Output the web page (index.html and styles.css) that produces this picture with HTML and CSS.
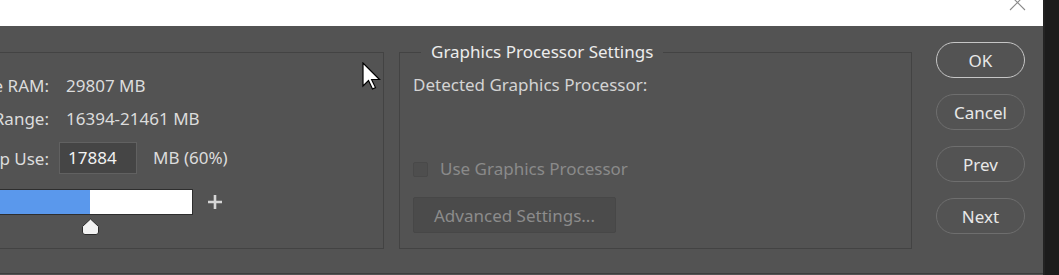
FILE: index.html
```html
<!DOCTYPE html>
<html lang="en">
<head>
<meta charset="utf-8">
<title>Performance</title>
<link rel="stylesheet" href="styles.css">
</head>
<body>
<div class="screen">
  <div class="window">
    <div class="titlebar">
      <svg class="close" width="17" height="17" viewBox="0 0 17 17" aria-hidden="true">
        <path d="M1 1 L16 16 M16 1 L1 16" stroke="#8a8a8a" stroke-width="1.1" fill="none"/>
      </svg>
    </div>
    <div class="content">
      <div class="main">
        <section class="panel memory">
          <div class="rows">
            <span class="label">Available RAM:</span><span class="value">29807 MB</span>
            <span class="label">Ideal Range:</span><span class="value">16394-21461 MB</span>
            <span class="label">Let Photoshop Use:</span>
            <span class="value-input"><span class="input">17884</span><span class="unit">MB (60%)</span></span>
          </div>
          <div class="slider-row">
            <div class="slider"><div class="fill" style="width:199px"></div></div>
            <svg class="plus" width="16" height="16" viewBox="0 0 16 16" aria-hidden="true">
              <path d="M8 1 V15 M1 8 H15" stroke="#d6d6d6" stroke-width="2.6" fill="none"/>
            </svg>
          </div>
          <div class="thumb-row">
            <svg class="thumb" style="margin-left:192px" width="18" height="17" viewBox="0 0 18 17" aria-hidden="true">
              <path d="M8.5 1 L16.5 8.5 V14 Q16.5 16.5 14 16.5 H3 Q0.5 16.5 0.5 14 V8.5 Z" fill="#f2f2f2" stroke="#2b2b2b" stroke-width="1"/>
            </svg>
          </div>
        </section>
        <fieldset class="panel gpu">
          <legend>Graphics Processor Settings</legend>
          <div class="detected">Detected Graphics Processor:</div>
          <label class="check"><span class="box"></span><span>Use Graphics Processor</span></label>
          <button class="adv" type="button">Advanced Settings...</button>
        </fieldset>
        <div class="buttons">
          <button class="pill primary" type="button">OK</button>
          <button class="pill" type="button">Cancel</button>
          <button class="pill" type="button">Prev</button>
          <button class="pill" type="button">Next</button>
        </div>
      </div>
      <div class="divider"></div>
    </div>
  </div>
  <div class="edge"></div>
</div>
<svg class="cursor" width="20" height="29" viewBox="0 0 20 29" aria-hidden="true">
  <path d="M1 1 L1 24 L6.5 18.5 L10.5 27 L13.5 25.6 L9.6 17.5 L17.5 17.5 Z" fill="#ffffff" stroke="#000000" stroke-width="1.2" stroke-linejoin="miter"/>
</svg>
</body>
</html>
```

FILE: styles.css
```css
* { box-sizing: border-box; }

html, body {
  margin: 0;
  padding: 0;
  width: 1059px;
  height: 275px;
  overflow: hidden;
  background: #1d1d1d;
  font-family: "Noto Sans", "Open Sans", sans-serif;
  font-size: 17px;
}

.screen {
  display: flex;
  width: 1059px;
  height: 275px;
}

.window {
  width: 1043px;
  flex-shrink: 0;
  display: flex;
  flex-direction: column;
  overflow: hidden;
}

.edge {
  flex: 1;
  background: #1c1c1c;
  border-left: 2px solid #232323;
}

.titlebar {
  height: 26px;
  background: #ffffff;
  display: flex;
  justify-content: flex-end;
  align-items: flex-start;
  padding-right: 17px;
  overflow: hidden;
  flex-shrink: 0;
}

.close {
  margin-top: -6px;
}

.content {
  flex: 1;
  background: #535353;
  display: flex;
  flex-direction: column;
}

.main {
  display: flex;
  align-items: flex-start;
  padding-top: 16px;
}

.panel {
  flex-shrink: 0;
}

/* Memory panel (cut off at the left) */
.memory {
  margin-left: -200px;
  margin-top: 10px;
  width: 584px;
  height: 197px;
  border: 1px solid #434343;
  padding-top: 16px;
  color: #dcdcdc;
}

.rows {
  display: grid;
  grid-template-columns: 248px auto;
  grid-template-rows: 33px 40px 32px;
  column-gap: 10px;
  align-items: start;
  line-height: 33px;
}

.label {
  text-align: right;
  white-space: nowrap;
}

.value {
  padding-left: 7px;
  white-space: nowrap;
}

.value-input {
  display: flex;
  align-items: center;
  height: 32px;
}

.input {
  width: 78px;
  height: 32px;
  line-height: 30px;
  border: 1px solid #616161;
  background: #454545;
  padding-left: 8px;
  color: #f2f2f2;
}

.unit {
  margin-left: 16px;
  line-height: 32px;
}

.slider-row {
  display: flex;
  align-items: center;
  margin-top: 15px;
  padding-left: 89px;
}

.slider {
  width: 303px;
  height: 26px;
  border: 1px solid #2e2e2e;
  background: #ffffff;
}

.fill {
  height: 100%;
  background: #5a98ec;
}

.plus {
  margin-left: 14px;
}

.thumb-row {
  display: flex;
  padding-left: 89px;
  margin-top: 3px;
}

/* Graphics processor fieldset */
.gpu {
  margin: 0 0 0 15px;
  width: 513px;
  height: 207px;
  border: 1px solid #434343;
  padding: 11px 0 0 13px;
  display: flex;
  flex-direction: column;
  align-items: flex-start;
}

.gpu legend {
  margin-left: 8px;
  padding: 0 10px;
  line-height: 20px;
  color: #ececec;
}

.detected {
  line-height: 24px;
  color: #d4d4d4;
}

.check {
  display: flex;
  align-items: center;
  margin-top: 60px;
  line-height: 24px;
  color: #8a8a8a;
}

.box {
  width: 15px;
  height: 15px;
  border: 1px solid #494949;
  background: #4e4e4e;
  border-radius: 2px;
  margin-right: 12px;
}

.adv {
  margin-top: 16px;
  width: 203px;
  height: 36px;
  background: #4b4b4b;
  border: 1px solid #474747;
  border-radius: 2px;
  color: #8c8c8c;
  font: inherit;
  padding: 0;
}

/* Right column buttons */
.buttons {
  margin-left: 24px;
  display: flex;
  flex-direction: column;
  gap: 16px;
}

.pill {
  width: 89px;
  height: 36px;
  border-radius: 18px;
  border: 1px solid #6e6e6e;
  background: transparent;
  color: #e8e8e8;
  font: inherit;
  padding: 0;
}

.pill.primary {
  border-color: #c6c6c6;
}

.divider {
  margin-top: 24px;
  height: 1px;
  background: #3d3d3d;
}

.cursor {
  position: absolute;
  left: 362px;
  top: 62px;
}
```
